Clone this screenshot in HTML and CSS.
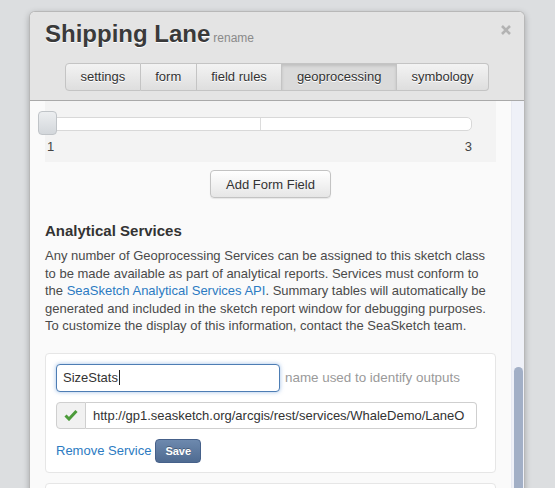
FILE: index.html
```html
<!DOCTYPE html>
<html>
<head>
<meta charset="utf-8">
<link rel="stylesheet" href="styles.css">
</head>
<body>
<div class="modal">
  <div class="modal-header">
    <div class="title-row">
      <h1 class="title">Shipping Lane</h1>
      <a class="rename">rename</a>
      <span class="close"><svg width="10" height="10" viewBox="0 0 10 10"><path d="M1 1 L9 9 M9 1 L1 9" stroke="#b3b3b3" stroke-width="2.6" stroke-linecap="butt"/></svg></span>
    </div>
    <div class="tabs">
      <span class="tab">settings</span>
      <span class="tab">form</span>
      <span class="tab">field rules</span>
      <span class="tab active">geoprocessing</span>
      <span class="tab">symbology</span>
    </div>
  </div>
  <div class="modal-body">
    <div class="content">
      <div class="field-item">
        <div class="slider">
          <div class="track"><span class="tick"></span></div>
          <span class="handle"></span>
        </div>
        <div class="slider-labels"><span>1</span><span>3</span></div>
      </div>
      <div class="add-row"><button class="btn">Add Form Field</button></div>
      <h3 class="section-title">Analytical Services</h3>
      <p class="desc">Any number of Geoprocessing Services can be assigned to this sketch class to be made available as part of analytical reports. Services must conform to the <a class="link">SeaSketch Analytical Services API</a>. Summary tables will automatically be generated and included in the sketch report window for debugging purposes. To customize the display of this information, contact the SeaSketch team.</p>
      <div class="service">
        <div class="row name-row">
          <div class="input focus"><span class="caret">SizeStats</span></div>
          <span class="hint">name used to identify outputs</span>
        </div>
        <div class="row url-row">
          <span class="addon"><svg width="14" height="12" viewBox="0 0 14 12"><path d="M1.5 6.5 L5 10 L12.5 2" fill="none" stroke="#4c9b3a" stroke-width="3"/></svg></span>
          <div class="url-input">http://gp1.seasketch.org/arcgis/rest/services/WhaleDemo/LaneO</div>
        </div>
        <div class="row action-row">
          <a class="link remove">Remove Service</a>
          <button class="save">Save</button>
        </div>
      </div>
      <div class="service next"></div>
    </div>
    <div class="scrollbar"><div class="thumb"></div></div>
  </div>
</div>
</body>
</html>
```

FILE: styles.css
```css
html, body {
  margin: 0;
  padding: 0;
  height: 100%;
  overflow: hidden;
}
body {
  background: #dcdee0;
  font-family: "Liberation Sans", Arial, sans-serif;
  color: #444;
}
.modal {
  margin: 11px 0 0 29px;
  width: 494px;
  height: 520px;
  border: 1px solid #b8b8b8;
  border-bottom: none;
  border-radius: 6px 6px 0 0;
  background: #fafafa;
  box-shadow: 0 2px 6px rgba(0,0,0,0.25);
  display: flex;
  flex-direction: column;
  overflow: hidden;
}
.modal-header {
  background: #e4e4e4;
  border-bottom: 1px solid #a9a9a9;
  padding: 8px 0 9px 15px;
  height: 71px;
}
.title-row {
  display: flex;
  align-items: baseline;
  height: 28px;
}
.title {
  margin: 0;
  font-size: 24px;
  line-height: 28px;
  font-weight: bold;
  color: #3a3a3a;
  text-shadow: 0 1px 0 #fff;
}
.rename {
  font-size: 12px;
  color: #8a8a8a;
  margin-left: 3px;
}
.close {
  margin-left: auto;
  margin-right: 13px;
  align-self: flex-start;
  margin-top: 5px;
  line-height: 0;
}
.tabs {
  display: flex;
  justify-content: center;
  margin: 15px 0 0 -15px;
}
.tab {
  font-size: 13px;
  color: #333;
  height: 26px;
  line-height: 26px;
  padding: 0 14.5px;
  background: linear-gradient(#f3f3f3, #dedede);
  border: 1px solid #c4c4c4;
  border-left: none;
  text-shadow: 0 1px 0 #fff;
}
.tab:first-child {
  border-left: 1px solid #c4c4c4;
  border-radius: 4px 0 0 4px;
}
.tab:last-child {
  border-radius: 0 4px 4px 0;
}
.tab.active {
  background: #dadada;
  box-shadow: inset 0 2px 3px rgba(0,0,0,0.12);
}
.modal-body {
  flex: 1;
  display: flex;
}
.content {
  flex: 1;
  padding: 0 15px;
}
.field-item {
  background: #f3f3f3;
  padding: 10px 24px 6px 0;
}
.slider {
  position: relative;
  margin-left: -7px;
  height: 24px;
  display: flex;
  align-items: center;
}
.track {
  flex: 1;
  height: 12px;
  background: #fff;
  border: 1px solid #d8d8d8;
  border-radius: 5px;
  position: relative;
  margin-top: 1px;
}
.tick {
  position: absolute;
  left: 221px;
  top: 0;
  bottom: 0;
  width: 1px;
  background: #dcdcdc;
}
.handle {
  position: absolute;
  left: 0;
  top: 0;
  width: 17px;
  height: 22px;
  border: 1px solid #c0c4c8;
  border-radius: 4px;
  background: linear-gradient(#eceef0, #d3d7db);
}
.slider-labels {
  display: flex;
  justify-content: space-between;
  margin: 3px 0 0 2px;
  font-size: 13px;
  line-height: 18px;
  color: #444;
}
.add-row {
  display: flex;
  justify-content: center;
  margin-top: 8px;
}
.btn {
  font-family: "Liberation Sans", Arial, sans-serif;
  font-size: 13px;
  color: #333;
  height: 28px;
  padding: 0 15px;
  background: linear-gradient(#ffffff, #e6e6e6);
  border: 1px solid #c3c3c3;
  border-radius: 4px;
  box-shadow: 0 1px 1px rgba(0,0,0,0.08);
}
.section-title {
  margin: 23px 0 0;
  font-size: 15px;
  line-height: 20px;
  font-weight: bold;
  color: #333;
}
.desc {
  margin: 6px 0 0;
  font-size: 13px;
  line-height: 17.5px;
  color: #4a4a4a;
}
.link {
  color: #2c7bc2;
}
.service {
  margin-top: 18px;
  background: #fff;
  border: 1px solid #e6e6e6;
  border-radius: 4px;
  padding: 10px 10px 9px;
}
.service.next {
  margin-top: 10px;
  height: 40px;
  padding: 0;
}
.row {
  display: flex;
  align-items: center;
}
.input {
  width: 210px;
  height: 26px;
  padding: 0 6px;
  border: 1px solid #4d7db4;
  border-radius: 4px;
  box-shadow: 0 0 4px rgba(82,140,210,0.55);
  font-size: 13px;
  line-height: 26px;
  color: #333;
  background: #fff;
}
.caret {
  border-right: 1px solid #222;
  padding-right: 1px;
}
.hint {
  margin-left: 5px;
  font-size: 13.4px;
  color: #9a9a9a;
}
.url-row {
  margin-top: 10px;
  width: 421px;
  height: 27px;
}
.addon {
  width: 28px;
  height: 25px;
  display: flex;
  align-items: center;
  justify-content: center;
  background: #f1f1f1;
  border: 1px solid #cfcfcf;
  border-radius: 4px 0 0 4px;
}
.url-input {
  flex: 1;
  height: 25px;
  line-height: 25px;
  padding-left: 7px;
  border: 1px solid #cfcfcf;
  border-left: none;
  border-radius: 0 4px 4px 0;
  font-size: 13px;
  color: #333;
  white-space: nowrap;
  overflow: hidden;
}
.action-row {
  margin-top: 10px;
}
.remove {
  font-size: 13px;
}
.save {
  margin-left: 4px;
  height: 24px;
  padding: 0 9px;
  font-family: "Liberation Sans", Arial, sans-serif;
  font-size: 11px;
  font-weight: bold;
  color: #fff;
  text-shadow: 0 -1px 0 rgba(0,0,0,0.3);
  background: linear-gradient(#6d89ae, #4f6b91);
  border: 1px solid #46618a;
  border-radius: 4px;
}
.scrollbar {
  width: 12px;
  background: #eff1f8;
  border-left: 1px solid #e8eaf2;
  display: flex;
  flex-direction: column;
  align-items: center;
}
.thumb {
  margin-top: 266px;
  width: 9px;
  flex: 1;
  background: #a2afc6;
  border-radius: 5px 5px 0 0;
}
```
